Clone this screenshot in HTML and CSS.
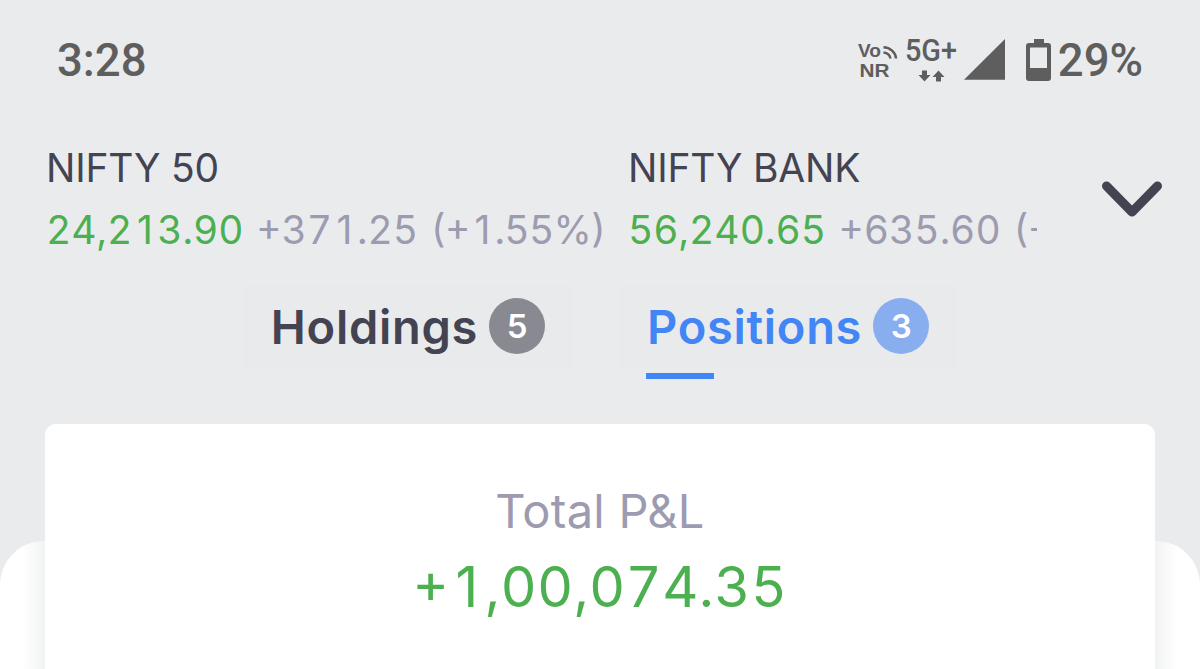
FILE: index.html
```html
<!DOCTYPE html>
<html lang="en">
<head>
  <meta charset="UTF-8">
  <meta name="viewport" content="width=device-width, initial-scale=1.0">
  <title>Portfolio - Positions</title>
  <link rel="stylesheet" href="styles.css">
</head>
<body>

  <!-- Status bar -->
  <div class="status-bar">
    <span class="clock">3:28</span>
    <div class="status-icons">
      <svg class="network" width="150" height="50" viewBox="0 0 150 50">
        <text x="2" y="21.5" class="net-vo" textLength="23" lengthAdjust="spacingAndGlyphs">Vo</text>
        <path d="M27.500 12.200A13 12 0 0 1 40 23.500M27.500 17.500A8 7 0 0 1 34.500 23.500" class="net-wave"/>
        <text x="3.500" y="42" class="net-nr" textLength="30" lengthAdjust="spacingAndGlyphs">NR</text>
        <text x="49" y="26" class="net-5g" textLength="52" lengthAdjust="spacingAndGlyphs">5G+</text>
        <path d="M66 35.500h5v4.500h3.500l-6 6.500-6-6.500h3.500zM80 46.500h5v-4.500h3.500l-6-6.500-6 6.500h3.500z"/>
        <path d="M108 44.800L149 4v40.800z"/>
      </svg>
      <svg class="battery" width="26" height="44" viewBox="0 0 26 44">
        <path fill-rule="evenodd" d="M8 1h10v4h4a3 3 0 0 1 3 3v32a3 3 0 0 1-3 3H3a3 3 0 0 1-3-3V8a3 3 0 0 1 3-3h5zM4 9.500v20.500h17V9.500z"/>
      </svg>
      <span class="charge">29%</span>
    </div>
  </div>

  <!-- Index ticker -->
  <div class="ticker">
    <div class="indices">
      <div class="index">
        <div class="index-name">NIFTY 50</div>
        <div class="index-value"><span class="up">24,2<span class="one">1</span>3.90</span> <span class="change">+37<span class="one">1</span>.25 <span class="percent">(+<span class="one">1</span>.55%)</span></span></div>
      </div>
      <div class="index">
        <div class="index-name">NIFTY BANK</div>
        <div class="index-value"><span class="up">56,240.65</span> <span class="change">+635.60 <span class="percent">(+</span></span></div>
      </div>
    </div>
    <svg class="chevron" width="62" height="38" viewBox="0 0 62 38">
      <path d="M5.500 6L31 32L56.500 6"/>
    </svg>
  </div>

  <!-- Tabs -->
  <div class="tabs">
    <div class="tab">
      <span class="tab-label">Holdings</span>
      <span class="badge">5</span>
    </div>
    <div class="tab active">
      <span class="tab-label">Positions</span>
      <span class="badge">3</span>
    </div>
  </div>

  <!-- Total P&L card over the white sheet -->
  <div class="content">
    <div class="sheet"></div>
    <div class="card">
      <div class="card-title">Total P&amp;L</div>
      <div class="card-value">+<span class="one">1</span>,00,074.35</div>
    </div>
  </div>

</body>
</html>
```
FILE: styles.css
```css
body {
  margin: 0;
  height: 669px;
  overflow: hidden;
  background-color: #eaebed;
  font-family: Inter, "Liberation Sans", sans-serif;
  color: #444351;
}

/* Status bar */
.status-bar {
  display: flex;
  justify-content: space-between;
  align-items: center;
  height: 120px;
  padding: 0 57px;
  box-sizing: border-box;
  font-family: Roboto, sans-serif;
  font-size: 45.5px;
  font-weight: 500;
  color: #5e5e5e;
}

.status-icons {
  display: flex;
  align-items: center;
}

.status-icons svg {
  fill: #5e5e5e;
}

.battery {
  margin-left: 20px;
  margin-right: 6px;
}

.net-vo,
.net-nr {
  font-family: "Liberation Sans", sans-serif;
  font-size: 19px;
  font-weight: bold;
}

.net-5g {
  font-size: 31px;
}

.net-wave {
  fill: none;
  stroke: #5e5e5e;
  stroke-width: 2.5;
}

/* Index ticker */
.ticker {
  display: flex;
  align-items: center;
  height: 136px;
  padding: 22px 37px 0 46px;
  box-sizing: border-box;
}

.indices {
  display: flex;
  width: 991px;
  overflow: hidden;
}

.index {
  flex: none;
  width: 582px;
  white-space: nowrap;
  font-size: 39px;
}

.index-name,
.index-value {
  line-height: 62px;
}

.index-name {
  letter-spacing: -0.2px;
}

.index-value {
  word-spacing: 2px;
}

/* signs and brackets are raised to the height of the digits */
.index-value,
.card-value {
  font-variant-numeric: tabular-nums;
  font-feature-settings: "case";
}

/* plain 1 without a foot, kept as wide as the other digits */
.one {
  display: inline-block;
  width: 0.64em;
  font-variant-numeric: normal;
  text-align: center;
}

.up {
  color: #4caf50;
}

.change {
  color: #9d9bb0;
}

.percent {
  letter-spacing: -0.7px;
}

.chevron {
  margin-left: auto;
  fill: none;
  stroke: #444351;
  stroke-width: 9;
  stroke-linecap: round;
  stroke-linejoin: round;
}

/* Tabs */
.tabs {
  display: flex;
  justify-content: center;
  gap: 46px;
  height: 139px;
  padding-top: 29px;
  box-sizing: border-box;
}

.tab {
  position: relative;
  display: flex;
  align-items: center;
  height: 83px;
  padding: 0 28px;
  box-sizing: border-box;
  background-color: #e9eaec;
}

.tab-label {
  font-size: 47px;
  font-weight: 600;
  letter-spacing: 0.7px;
}

.badge {
  width: 56px;
  height: 56px;
  margin-left: 11px;
  margin-bottom: 2px;
  border-radius: 50%;
  background-color: #898991;
  color: #fff;
  font-size: 33px;
  font-weight: 600;
  line-height: 57px;
  text-align: center;
}

.tab.active {
  color: #4285f4;
}

.tab.active .badge {
  background-color: #88aeef;
}

/* underline of the selected tab */
.tab.active::after {
  content: "";
  position: absolute;
  left: 27px;
  bottom: -11px;
  width: 68px;
  height: 6px;
  background-color: #4285f4;
}

/* Content */
.content {
  display: grid;
  height: 274px;
  padding-top: 29px;
  box-sizing: border-box;
}

.sheet,
.card {
  grid-area: 1 / 1;
}

/* the gradient shades the sheet next to the card edges */
.sheet {
  margin-top: 117px;
  border-radius: 44px 44px 0 0;
  background: linear-gradient(to right, #fff 22px, #f2f3f3 45px, #f2f3f3 calc(100% - 45px), #fff calc(100% - 22px));
}

.card {
  margin: 0 45px;
  padding-top: 57px;
  box-sizing: border-box;
  border-radius: 11px 11px 0 0;
  background-color: #fff;
  text-align: center;
}

.card-title {
  font-size: 47px;
  line-height: 60px;
  letter-spacing: 0.3px;
  color: #9d9bb0;
}

.card-value {
  margin-top: 4px;
  font-size: 56px;
  line-height: 84px;
  letter-spacing: 0.3px;
  color: #4caf50;
}
```
